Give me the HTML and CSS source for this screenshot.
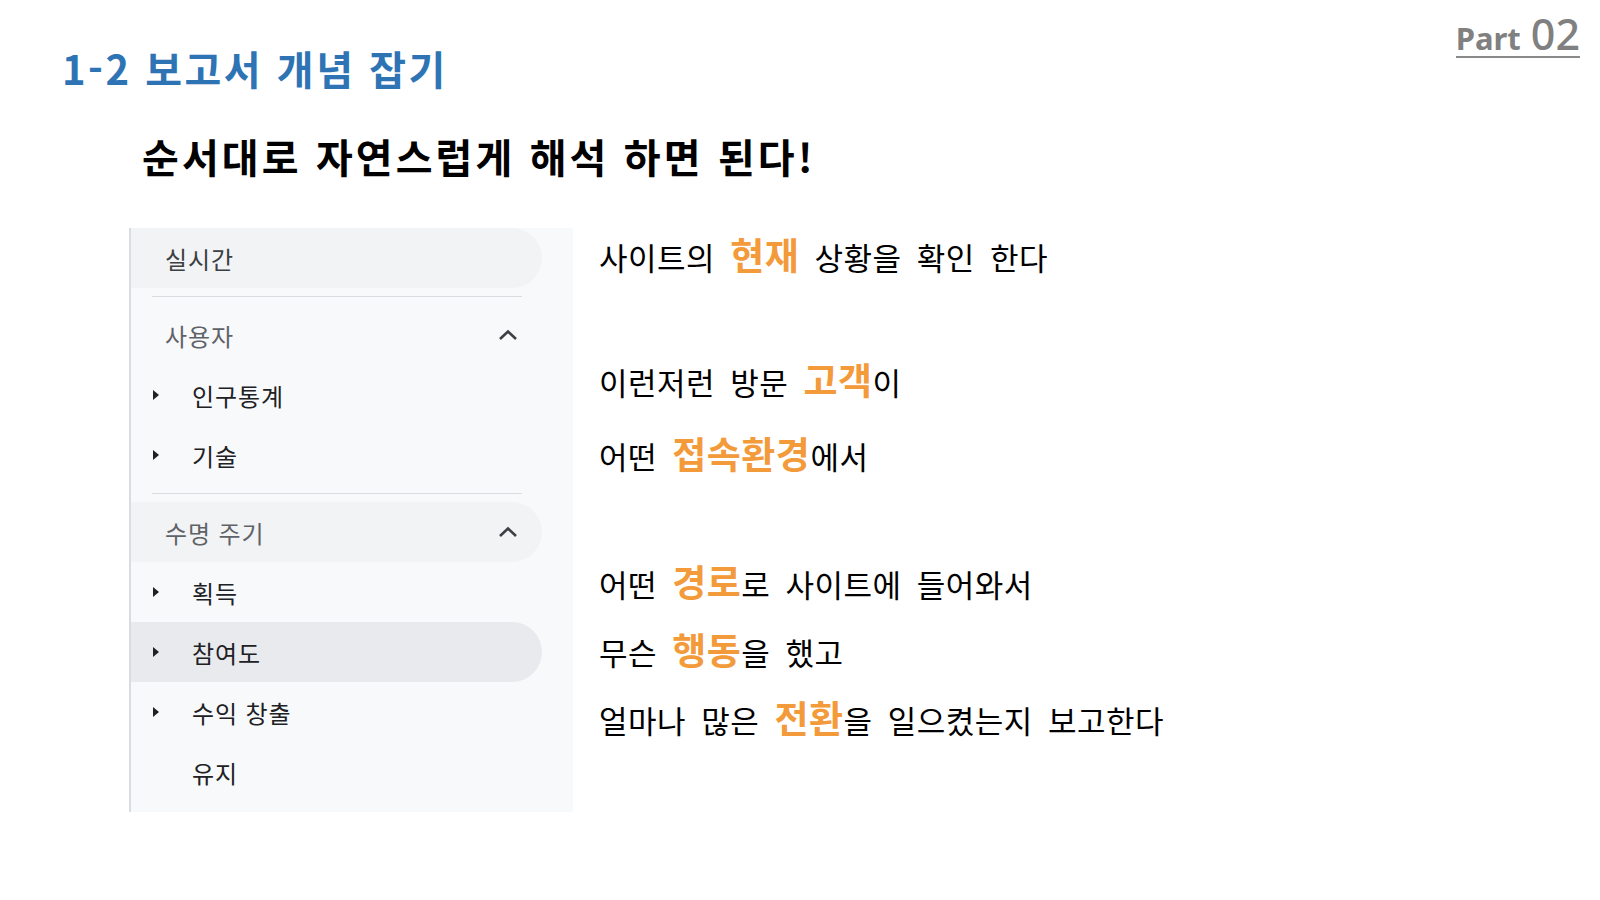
FILE: index.html
```html
<!DOCTYPE html>
<html lang="ko">
<head>
<meta charset="utf-8">
<title>1-2 보고서 개념 잡기</title>
<link rel="stylesheet" href="styles.css">
</head>
<body>
<div class="page">
  <header class="top">
    <h1 class="title">1-2 보고서 개념 잡기</h1>
    <div class="part"><span class="part-word">Part</span><span class="part-num">02</span></div>
  </header>
  <h2 class="subtitle">순서대로 자연스럽게 해석 하면 된다!</h2>
  <main class="content">
    <nav class="sidebar">
      <div class="item top-item pill">실시간</div>
      <div class="divider"></div>
      <div class="item group">사용자<svg class="chev" viewBox="0 0 20 12"><path d="M2 10 L10 2.5 L18 10" fill="none" stroke="#3c4043" stroke-width="2.6"/></svg></div>
      <div class="item child"><span class="tri"></span>인구통계</div>
      <div class="item child"><span class="tri"></span>기술</div>
      <div class="divider"></div>
      <div class="item group pill">수명 주기<svg class="chev" viewBox="0 0 20 12"><path d="M2 10 L10 2.5 L18 10" fill="none" stroke="#3c4043" stroke-width="2.6"/></svg></div>
      <div class="item child"><span class="tri"></span>획득</div>
      <div class="item child active"><span class="tri"></span>참여도</div>
      <div class="item child"><span class="tri"></span>수익 창출</div>
      <div class="item child"><span class="tri none"></span>유지</div>
    </nav>
    <div class="notes">
      <p class="line">사이트의 <b>현재</b> 상황을 확인 한다</p>
      <p class="line gap">이런저런 방문 <b>고객</b>이</p>
      <p class="line near">어떤 <b>접속환경</b>에서</p>
      <p class="line gap2">어떤 <b>경로</b>로 사이트에 들어와서</p>
      <p class="line step">무슨 <b>행동</b>을 했고</p>
      <p class="line step">얼마나 많은 <b>전환</b>을 일으켰는지 보고한다</p>
    </div>
  </main>
</div>
</body>
</html>
```

FILE: styles.css
```css
* { box-sizing: border-box; }
html, body { margin: 0; padding: 0; background: #ffffff; }
body {
  width: 1600px;
  height: 900px;
  overflow: hidden;
  font-family: "Noto Sans CJK KR", "Noto Sans", sans-serif;
  color: #000;
}
.page { width: 1600px; height: 900px; }

.top {
  display: flex;
  justify-content: space-between;
  align-items: flex-start;
  padding: 0 20px 0 62px;
}
.title {
  margin: 40px 0 0 0;
  font-size: 40px;
  line-height: 56px;
  font-weight: 700;
  color: #2E74B5;
  letter-spacing: 2.5px;
}
.part {
  margin-top: 12px;
  color: #808080;
  font-family: "Noto Sans", "Open Sans", sans-serif;
  border-bottom: 2px solid #8a8a8a;
  line-height: 44px;
  height: 46px;
  white-space: nowrap;
  display: flex;
  align-items: baseline;
}
.part-word { font-size: 31px; font-weight: 700; margin-right: 10px; }
.part-num { font-size: 43px; font-weight: 500; }

.subtitle {
  margin: 32px 0 0 142px;
  font-size: 40px;
  line-height: 56px;
  font-weight: 700;
  color: #000;
  letter-spacing: 3.1px;
}

.content {
  display: flex;
  margin-top: 44px;
  padding-left: 129px;
}
.sidebar {
  width: 444px;
  height: 584px;
  background: #F8F9FA;
  border-left: 2px solid #dadce0;
  padding-right: 31px;
}
.item {
  position: relative;
  height: 60px;
  display: flex;
  align-items: center;
  font-size: 24px;
  letter-spacing: 0.9px;
  color: #202124;
  border-radius: 0 30px 30px 0;
}
.pill { background: #F1F3F4; }
.top-item { padding-left: 34px; color: #3c4043; }
.group { padding-left: 34px; color: #5f6368; justify-content: space-between; padding-right: 24px; }
.chev { width: 20px; height: 12px; }
.child { padding-left: 22px; }
.child.active { background: #E8EAED; }
.tri {
  width: 0; height: 0;
  border-top: 5.5px solid transparent;
  border-bottom: 5.5px solid transparent;
  border-left: 6px solid #202124;
  margin-right: 33px;
}
.tri.none { border-left-color: transparent; }
.divider {
  height: 1px;
  background: #dadce0;
  margin: 8px 0 8px 21px;
  width: 370px;
}

.notes {
  margin-left: 26px;
  margin-top: -7px;
}
.line {
  margin: 0;
  height: 66px;
  line-height: 66px;
  font-size: 31px;
  word-spacing: 6px;
  letter-spacing: 0.5px;
  white-space: nowrap;
  color: #000;
}
.line b {
  color: #F39A3B;
  font-size: 37px;
  font-weight: 700;
  letter-spacing: 0.5px;
}
.line.gap { margin-top: 59px; }
.line.near { margin-top: 8px; }
.line.gap2 { margin-top: 62px; }
.line.step { margin-top: 2px; }
```
